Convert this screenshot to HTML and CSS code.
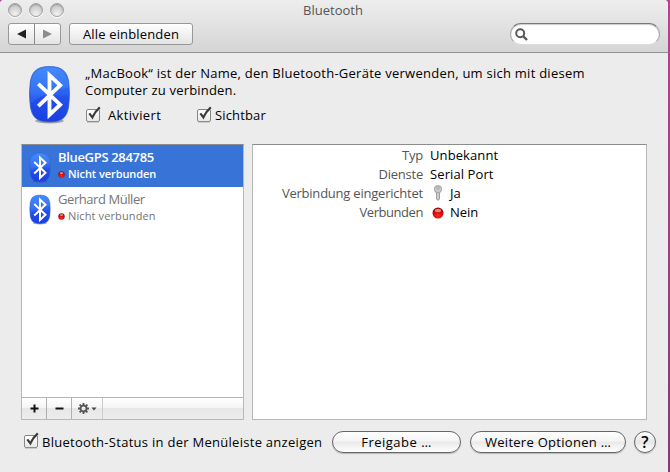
FILE: index.html
```html
<!DOCTYPE html>
<html lang="de">
<head>
<meta charset="utf-8">
<title>Bluetooth</title>
<link rel="stylesheet" href="styles.css">
</head>
<body>
<svg width="0" height="0" class="defs" aria-hidden="true">
  <defs>
    <linearGradient id="blue" x1="0" y1="0" x2="0" y2="1"><stop offset="0" stop-color="#3a80f5"/><stop offset=".5" stop-color="#2a60f0"/><stop offset=".55" stop-color="#2450ea"/><stop offset="1" stop-color="#1b3fe2"/></linearGradient>
    <linearGradient id="gloss" x1="0" y1="0" x2="0" y2="1"><stop offset="0" stop-color="#4a90ff" stop-opacity=".6"/><stop offset="1" stop-color="#4285fa" stop-opacity=".25"/></linearGradient>
    <radialGradient id="red" cx=".5" cy=".7" r=".6"><stop offset="0" stop-color="#ff2a20"/><stop offset=".6" stop-color="#dc0808"/><stop offset="1" stop-color="#8d0808"/></radialGradient>
    <linearGradient id="box" x1="0" y1="0" x2="0" y2="1"><stop offset="0" stop-color="#fff"/><stop offset=".5" stop-color="#f4f4f4"/><stop offset="1" stop-color="#e6e6e6"/></linearGradient>
    <symbol id="bt" viewBox="0 0 42 58">
      <ellipse cx="21" cy="55" rx="14" ry="2.4" fill="#000" opacity=".3"/>
      <path d="M21 1.500C34 1.500 38 7 39.800 16Q41.500 29 39.800 41C38 51 34 56 21 56S4 51 2.200 41Q.500 29 2.200 16C4 7 8 1.500 21 1.500Z" fill="url(#blue)" stroke="#3264cf" stroke-width=".8"/>
      <path d="M21 2.500C33 2.500 37 8 39 16L39.500 22Q21 25 2.500 37Q1.500 27 3 16C5 8 9 2.500 21 2.500Z" fill="url(#gloss)"/>
      <path d="M10 18.500L31.500 39L21 49V10L31.500 20L10 40.500" fill="none" stroke="#fff" stroke-width="3.800"/>
    </symbol>
    <symbol id="check" viewBox="0 0 17 17">
      <rect x="1.500" y="3.500" width="13" height="12" rx="1.500" fill="url(#box)" stroke="#858585"/>
      <path d="M2 16.200H14" stroke="#aaa" stroke-width=".7"/>
      <path d="M4.300 7.300L7.400 11.300Q10 5.500 14.800 1.300" fill="none" stroke="#3c3c3c" stroke-width="2.200"/>
    </symbol>
    <symbol id="dot" viewBox="0 0 12 12"><circle cx="6" cy="6" r="5.500" fill="url(#red)"/><ellipse cx="6" cy="3.400" rx="3.200" ry="1.700" fill="#fff" opacity=".5"/></symbol>
  </defs>
</svg>
<div class="window">
  <header class="toolbar">
    <div class="titlebar">
      <div class="lights"><i></i><i></i><i></i></div>
      <span class="title">Bluetooth</span>
    </div>
    <div class="tools">
      <div class="nav">
        <button><svg width="10" height="10"><path d="M0 5L9 .5V9.500Z" fill="#222"/></svg></button>
        <button><svg width="10" height="10"><path d="M9 5L0 .5V9.500Z" fill="#8c8c8c"/></svg></button>
      </div>
      <button class="show-all">Alle einblenden</button>
      <div class="search"><svg width="13" height="13"><circle cx="5.200" cy="5.200" r="4" fill="none" stroke="#5a5a5a" stroke-width="2"/><path d="M8 8L12 12" stroke="#5a5a5a" stroke-width="2.400"/></svg></div>
    </div>
  </header>
  <main>
    <section class="intro">
      <svg class="logo"><use href="#bt"/></svg>
      <div>
        <p><span class="line1">„MacBook“ ist der Name, den Bluetooth-Geräte verwenden, um sich mit diesem</span><br><span class="line2">Computer zu verbinden.</span></p>
        <div class="checks">
          <label class="active"><svg class="check"><use href="#check"/></svg><span>Aktiviert</span></label>
          <label class="visible"><svg class="check"><use href="#check"/></svg><span>Sichtbar</span></label>
        </div>
      </div>
    </section>
    <section class="panes">
      <div class="pane devices">
        <div class="list">
          <div class="device selected">
            <svg class="small-logo"><use href="#bt"/></svg>
            <div><div class="name">BlueGPS 284785</div><div class="state"><svg><use href="#dot"/></svg><span>Nicht verbunden</span></div></div>
          </div>
          <div class="device">
            <svg class="small-logo"><use href="#bt"/></svg>
            <div><div class="name">Gerhard Müller</div><div class="state"><svg><use href="#dot"/></svg><span>Nicht verbunden</span></div></div>
          </div>
        </div>
        <div class="actions">
          <button><svg width="9" height="9"><path d="M.5 4.500H8.500M4.500 .5V8.500" stroke="#111" stroke-width="2"/></svg></button>
          <button><svg width="9" height="9"><path d="M.5 4.500H8.500" stroke="#111" stroke-width="2"/></svg></button>
          <button class="gear"><svg width="19" height="11"><circle cx="5.500" cy="5.500" r="3" fill="none" stroke="#555" stroke-width="1.800"/><path d="M5.500 0V2M5.500 9V11M0 5.500H2M9 5.500H11M1.600 1.600L3 3M8 8L9.400 9.400M9.400 1.600L8 3M3 8L1.600 9.400" stroke="#555" stroke-width="1.800"/><path d="M13.500 4.500H18.500L16 7.500Z" fill="#444"/></svg></button>
        </div>
      </div>
      <div class="pane details">
        <dl>
          <dt class="typ">Typ</dt><dd class="unknown">Unbekannt</dd>
          <dt class="services">Dienste</dt><dd class="serial">Serial Port</dd>
          <dt class="paired">Verbindung eingerichtet</dt>
          <dd><svg class="key" viewBox="0 0 10 16"><path d="M3.500 7H6.500V14L5 15.500L3.500 14Z" fill="#b5b5b5" stroke="#888" stroke-width=".7"/><circle cx="5" cy="4.200" r="3.700" fill="#c8c8c8" stroke="#999" stroke-width=".8"/><circle cx="5" cy="3" r="1.100" fill="#fff" stroke="#777" stroke-width=".6"/><path d="M5 8V14" stroke="#eee" stroke-width=".8"/></svg><span>Ja</span></dd>
          <dt class="connected">Verbunden</dt>
          <dd><svg class="big-dot"><use href="#dot"/></svg><span class="no">Nein</span></dd>
        </dl>
      </div>
    </section>
    <footer>
      <label class="status"><svg class="check"><use href="#check"/></svg><span>Bluetooth-Status in der Menüleiste anzeigen</span></label>
      <button class="pill share">Freigabe …</button>
      <button class="pill more">Weitere Optionen …</button>
      <button class="help">?</button>
    </footer>
  </main>
</div>
</body>
</html>
```
FILE: styles.css
```css
* { box-sizing: border-box; }
body { margin: 0; width: 670px; height: 472px; overflow: hidden; background: linear-gradient(#b4429c, #813a7c); font: 13px/17px "Open Sans", sans-serif; color: #000; }
.defs { position: absolute; }
button { font: inherit; color: inherit; padding: 0; margin: 0; border: 0; background: none; display: flex; align-items: center; justify-content: center; white-space: nowrap; }
svg { display: block; flex: none; }
p, dl, dd { margin: 0; }
.window { width: 668px; height: 472px; background: #ececec; border-radius: 4px 4px 0 0; overflow: hidden; }
.toolbar { height: 53px; background: linear-gradient(#eee, #d5d5d5); border-bottom: 1px solid #929292; }
.titlebar { display: grid; grid-template-columns: 1fr auto 1fr; height: 23px; padding: 0 2px 0 8px; }
.lights { display: flex; gap: 7px; padding-top: 3px; }
.lights i { width: 14px; height: 14px; border-radius: 50%; border: 1px solid #a2a2a2; background: radial-gradient(circle at 50% 85%, #f2f2f2, #c8c8c8 75%); box-shadow: inset 0 1px 1px #999, 0 1px 0 #fff; }
.title { color: #555; padding-top: 2px; margin-left: -4px; margin-right: 4px; }
.tools { display: flex; padding-left: 8px; height: 22px; }
.nav { display: flex; width: 53px; border: 1px solid #989898; border-radius: 3px; background: linear-gradient(#fff, #e4e4e4); }
.nav button { flex: 1; }
.nav button + button { border-left: 1px solid #888; }
.show-all { width: 124px; margin-left: 8px; border: 1px solid #989898; border-radius: 3px; background: linear-gradient(#fff, #e4e4e4); letter-spacing: .15px; }
.search { width: 150px; margin-left: auto; margin-right: 8px; background: #fff; border: 1px solid #aaa; border-top-color: #777; border-bottom-color: #ddd; border-radius: 11px; box-shadow: inset 0 1px 1px #ccc; padding: 4px 0 0 4px; }
main { padding: 0 21px; }
.intro { display: flex; height: 91px; padding: 12px 0 0 7px; }
.logo { width: 43px; height: 59px; margin-right: 14px; }
.intro p { white-space: nowrap; }
.line1 { letter-spacing: .25px; }
.line2 { letter-spacing: .2px; }
.checks { display: flex; margin-top: 7px; }
label { display: flex; }
.check { width: 17px; height: 17px; }
.active { width: 111px; letter-spacing: .35px; }
.active span, .visible span { padding-top: 1px; }
.active span { margin-left: 6px; }
.visible { letter-spacing: .15px; }
.visible span { margin-left: 2px; }
.panes { display: flex; gap: 8px; height: 276px; margin-top: -1px; }
.pane { background: #fff; border: 1px solid #b8b8b8; border-top-color: #8c8c8c; }
.devices { width: 223px; display: flex; flex-direction: column; }
.details { width: 395px; padding-top: 2px; }
.list { flex: 1; }
.intro { height: 92px; }
.device { display: flex; height: 42px; padding: 4px 0 0 7px; color: #757575; }
.name { letter-spacing: -.43px; }
.small-logo { width: 22px; height: 31px; margin: 3px 7px 0 0; }
.selected { background: #3874d8; color: #fff; }
.selected .name { font-weight: 600; letter-spacing: -.33px; }
.selected .state { font-weight: 600; letter-spacing: -.07px; }
.state { display: flex; align-items: center; gap: 3px; font-size: 11px; letter-spacing: .12px; }
.state svg { width: 7px; height: 7px; margin-top: 1px; }
.device .state { margin-top: -1px; }
.actions { display: flex; height: 22px; border-top: 1px solid #b5b5b5; background: linear-gradient(#fff, #f4f4f4 48%, #e7e7e7 50%, #ededed); }
.actions button { width: 25px; border-right: 1px solid #b0b0b0; }
.actions .gear { width: 31px; border-color: #ccc; }
dl { display: grid; grid-template-columns: 170px 1fr; column-gap: 7px; grid-auto-rows: 19px; line-height: 17px; }
dt { text-align: right; color: #555; white-space: nowrap; letter-spacing: -.22px; }
.connected { letter-spacing: -.45px; }
.unknown, .serial { letter-spacing: .1px; }
dd { display: flex; }
dd svg + span { margin-left: 6px; }
.key { width: 10px; height: 16px; margin: 0 1px 0 3px; }
.big-dot { width: 12px; height: 12px; margin: 3px 0 0 2px; }
footer { display: flex; align-items: center; margin-right: -9px; padding-top: 11px; }
.status { width: 311px; height: 19px; padding-left: 2px; white-space: nowrap; letter-spacing: .28px; }
.status .check { margin-top: -1px; }
.status span { margin-left: 2px; padding-top: 1px; }
.pill { height: 22px; border: 1px solid #666; border-radius: 11px; background: linear-gradient(#fff, #f5f5f5 45%, #e9e9e9 50%, #fff); box-shadow: 0 1px 1px #bbb; }
.share { width: 129px; letter-spacing: .5px; }
.more { width: 156px; margin-left: 9px; letter-spacing: .28px; }
.help { width: 22px; height: 22px; margin-left: 8px; border: 1px solid #666; border-radius: 50%; background: linear-gradient(#fff, #e6e6e6 50%, #fff); font-size: 16px; font-weight: 600; box-shadow: 0 1px 1px #bbb; }
```
